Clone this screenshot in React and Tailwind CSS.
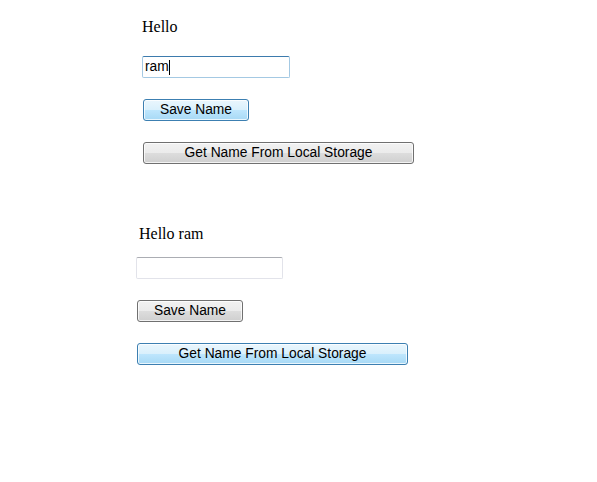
import React from 'react';

const serif = "font-['Liberation_Serif','Times_New_Roman',serif]";
const sans = "font-['Liberation_Sans',Arial,sans-serif]";

const GRAY_BTN =
  'border-[#707070] bg-[linear-gradient(#f2f2f2_0%,#ebebeb_50%,#dddddd_50%,#cfcfcf_100%)]';
const BLUE_BTN =
  'border-[#3c7fb1] bg-[linear-gradient(#eaf6fd_0%,#d9f0fc_50%,#bee6fd_50%,#a7d9f5_100%)]';

const WinButton = ({ label, width, blue }) => (
  <button
    className={`${sans} ${blue ? BLUE_BTN : GRAY_BTN} h-[22px] ml-px mt-[21px] pb-px border rounded-[3px] shadow-[inset_0_0_0_1px_rgba(255,255,255,0.75)] text-[13.8px] leading-none text-black flex items-center justify-center`}
    style={{ width }}
  >
    {label}
  </button>
);

const NameForm = ({ value, focused, btnBlue }) => (
  <>
    {focused ? (
      <div
        className={`${sans} mt-[20px] w-[148px] h-[22px] border border-[#a4c9e3] border-t-[#3d7bad] rounded-[2px] bg-white flex items-center pl-[2px] text-[13.8px] text-black`}
      >
        {value}
        <span className="inline-block w-px h-[15px] bg-black" />
      </div>
    ) : (
      <div className="mt-[14px] w-[147px] h-[22px] border border-[#e2e3ea] border-t-[#abadb3] rounded-[2px] bg-white" />
    )}
    <WinButton label="Save Name" width={106} blue={btnBlue === 'save'} />
    <WinButton label="Get Name From Local Storage" width={271} blue={btnBlue === 'get'} />
  </>
);

export default function App() {
  return (
    <div className="min-h-screen bg-white">
      <div className="pt-[18px] pl-[142px] flex flex-col items-start">
        <p className={`${serif} text-[16px] leading-[18px] text-black`}>Hello</p>
        <NameForm value="ram" focused btnBlue="save" />
      </div>

      <div className="mt-[61px] pl-[136px] flex flex-col items-start">
        <p className={`${serif} ml-[3px] text-[16px] leading-[18px] text-black`}>Hello ram</p>
        <NameForm value="" btnBlue="get" />
      </div>
    </div>
  );
}
